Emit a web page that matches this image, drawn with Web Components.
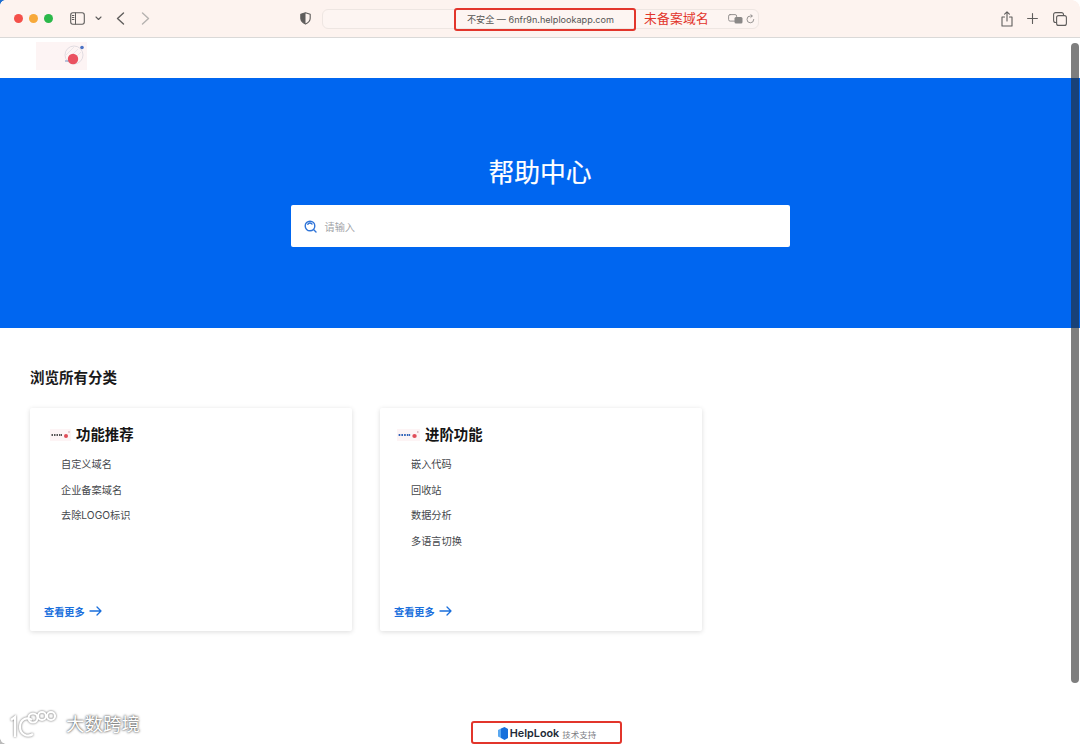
<!DOCTYPE html>
<html lang="zh-CN">
<head>
<meta charset="UTF-8">
<title>帮助中心</title>
<style>
    html, body { margin: 0; height: 100%; background: #fff; }
    body {
        width: 1080px; height: 744px; overflow: hidden; position: relative;
        font-family: "Inter", "Noto Sans CJK SC", sans-serif;
        display: flex; flex-direction: column;
    }
</style>
</head>
<body>
<browser-bar></browser-bar>
<site-logo></site-logo>
<hero-search heading="帮助中心" placeholder="请输入"></hero-search>
<category-list heading="浏览所有分类">
    <category-card heading="功能推荐" dots="#555">
        <span>自定义域名</span><span>企业备案域名</span><span>去除LOGO标识</span>
    </category-card>
    <category-card heading="进阶功能" dots="#2f62b8" wide>
        <span>嵌入代码</span><span>回收站</span><span>数据分析</span><span>多语言切换</span>
    </category-card>
</category-list>
<site-footer></site-footer>
<page-overlays></page-overlays>

<script>
    // ------------------------------------------------------------ helper
    function define(tag, html, init) {
        customElements.define(tag, class extends HTMLElement {
            constructor() {
                super();
                this.attachShadow({ mode: 'open' }).innerHTML = html;
            }
            connectedCallback() {
                if (init) init(this, this.shadowRoot);
            }
        });
    }

    // ------------------------------------------------------------ <browser-bar>
    define('browser-bar', `
        <style>
            :host { display: flex; align-items: center; flex: none; height: 37px; background: #fdf3ef;
                    border-bottom: 1px solid #dad9d8; color: #5f5d5c; position: relative; }
            svg { display: block; fill: none; stroke: currentColor; stroke-linecap: round; stroke-linejoin: round; flex: none; }
            .lights { display: flex; gap: 6px; margin-left: 14px; }
            .lights i { width: 9px; height: 9px; border-radius: 50%; }
            .side { margin-left: 17px; }
            .chev { margin-left: 10px; }
            .back { margin-left: 14px; }
            .fwd { margin-left: 15.5px; color: #b5b2b0; }
            .shield { margin-left: 150.5px; }
            .url { margin-left: 11px; width: 437px; height: 20px; box-sizing: border-box; border: 1px solid #eee6e2;
                   border-radius: 6px; background: #fdf5f2; display: flex; align-items: center; flex: none; }
            .addr { margin-left: 141.5px; width: 152px; text-align: center; white-space: nowrap; font-size: 9.1px; color: #565554; }
            .tr { margin-left: 111.5px; color: #8a8887; }
            .re { margin-left: 3px; color: #8a8887; }
            .share { margin-left: 242px; }
            .plus { margin-left: 14px; }
            .tabs { margin-left: 15px; }
            .note { position: absolute; left: 644px; top: 10px; font-size: 12.8px; line-height: 17px; color: #e2352b; letter-spacing: .2px; }
        </style>
        <div class="lights">
            <i style="background:#f4504a"></i><i style="background:#f7a93a"></i><i style="background:#2bb84a"></i>
        </div>
        <svg class="side" width="15" height="13" viewBox="0 0 15 13"><rect x=".7" y=".7" width="13.6" height="11.6" rx="2.2" stroke-width="1.1"/><path d="M5.5 1v11M2.3 3.5h1.6M2.3 5.5h1.6M2.3 7.5h1.6" stroke-width="1"/></svg>
        <svg class="chev" width="7" height="5" viewBox="0 0 7 5"><path d="M1 1l2.5 2.5L6 1" stroke-width="1.1"/></svg>
        <svg class="back" width="9" height="13" viewBox="0 0 9 13"><path d="M7.5 1L1.5 6.5l6 5.5" stroke-width="1.4"/></svg>
        <svg class="fwd" width="9" height="13" viewBox="0 0 9 13"><path d="M1.5 1l6 5.5-6 5.5" stroke-width="1.4"/></svg>
        <svg class="shield" width="11" height="13" viewBox="0 0 11 13"><path d="M5.5 .8l4.7 1.5v4c0 2.8-2 4.6-4.7 5.8C2.8 10.900.8 9.100.8 6.300v-4z" stroke-width="1.1"/><path d="M5.500 .8v11.300C2.800 10.900.8 9.100.8 6.300v-4z" fill="currentColor" stroke="none"/></svg>
        <div class="url">
            <span class="addr">不安全 — 6nfr9n.helplookapp.com</span>
            <svg class="tr" width="15" height="10" viewBox="0 0 15 10"><rect x=".6" y=".6" width="8" height="6.5" rx="1.5" stroke-width=".9"/><rect x="6.5" y="3" width="8" height="6.5" rx="1.5" fill="currentColor" stroke="none"/></svg>
            <svg class="re" width="9" height="10" viewBox="0 0 9 10"><path d="M7.8 5.5A3.4 3.4 0 1 1 4.5 2H6M4.8 .6L6.3 2 4.800 3.400" stroke-width=".9"/></svg>
        </div>
        <svg class="share" width="12" height="16" viewBox="0 0 12 16"><path d="M3.5 6H1v9h10V6H8.5M6 10V1M3.6 3.2L6 .9l2.4 2.3" stroke-width="1.1"/></svg>
        <svg class="plus" width="11" height="11" viewBox="0 0 11 11"><path d="M5.5 .6v9.8M.6 5.5h9.8" stroke-width="1.1"/></svg>
        <svg class="tabs" width="14" height="14" viewBox="0 0 14 14"><rect x="3.6" y="3.6" width="9.8" height="9.8" rx="2" stroke-width="1.1"/><path d="M10.5 3.5V2.6A2 2 0 0 0 8.5.6H2.6a2 2 0 0 0-2 2v5.9a2 2 0 0 0 2 2h1" stroke-width="1.1"/></svg>
        <span class="note">未备案域名</span>
    `);

    // ------------------------------------------------------------ <site-logo>
    define('site-logo', `
        <style>
            :host { display: block; flex: none; height: 40px; padding-left: 36px; box-sizing: border-box; padding-top: 4px; }
            svg { display: block; }
        </style>
        <svg width="51" height="28" viewBox="0 0 51 28">
            <rect width="51" height="28" fill="#fdf4f4"/>
            <circle cx="38" cy="13" r="9" fill="none" stroke="#d9d6dc" stroke-width=".8"/>
            <path d="M32 17l10-10M35 20l10-10M30 13l8-8" stroke="#dedbe0" stroke-width=".6"/>
            <circle cx="46" cy="5.5" r="1.8" fill="#4a72c4"/>
            <path d="M29 19h5" stroke="#7a8fc0" stroke-width="1"/>
            <circle cx="37" cy="17" r="5.2" fill="#ea5160"/>
        </svg>
    `);

    // ------------------------------------------------------------ <hero-search>
    define('hero-search', `
        <style>
            :host { display: flex; flex-direction: column; align-items: center; flex: none; height: 250px;
                    box-sizing: border-box; padding-top: 77px; background: #0066f0; }
            h1 { margin: 0; font-size: 25.8px; line-height: 36px; font-weight: 400; color: #fff; -webkit-text-stroke: .2px #fff; }
            .box { margin-top: 14px; width: 499px; height: 42px; box-sizing: border-box; background: #fff; border-radius: 2px;
                   display: flex; align-items: center; gap: 8px; padding-left: 13px; }
            .ph { font-size: 10.2px; color: #a3a5a8; }
            svg { display: block; fill: none; stroke: #2f74d8; stroke-width: 1.4; stroke-linecap: round; }
        </style>
        <h1 id="t"></h1>
        <div class="box">
            <svg width="13" height="13" viewBox="0 0 13 13"><circle cx="6" cy="6" r="4.8"/><path d="M3.8 4.2A3 3 0 0 1 8 4M9.5 9.5l2.500 2.500"/></svg>
            <span class="ph" id="p"></span>
        </div>
    `, (el, root) => {
        root.getElementById('t').textContent = el.getAttribute('heading');
        root.getElementById('p').textContent = el.getAttribute('placeholder');
    });

    // ------------------------------------------------------------ <category-list>
    define('category-list', `
        <style>
            :host { display: block; flex: 1; padding: 40px 30px 0; box-sizing: border-box; }
            h2 { margin: 0 0 20px; font-size: 14.5px; line-height: 20px; font-weight: 600; color: #1a1a1a; }
            .grid { display: flex; gap: 28.5px; }
        </style>
        <h2 id="t"></h2>
        <div class="grid"><slot></slot></div>
    `, (el, root) => {
        root.getElementById('t').textContent = el.getAttribute('heading');
    });

    // ------------------------------------------------------------ <category-card>
    define('category-card', `
        <style>
            :host { display: flex; flex-direction: column; width: 321.5px; height: 223px; box-sizing: border-box;
                    padding: 17px 14px 12px 20px; background: #fff; border-radius: 2px;
                    box-shadow: 0 1px 5px rgba(0,0,0,.14); }
            :host([wide]) .head svg { margin-left: -3px; width: 23px; }
            .head { display: flex; align-items: center; gap: 5px; height: 20px; }
            h3 { margin: 0; font-size: 14.4px; line-height: 20px; font-weight: 600; color: #151515; }
            svg { display: block; }
            .items { display: flex; flex-direction: column; margin: 7px 0 0 11px; flex: 1; }
            ::slotted(span) { display: block; font-size: 10.2px; line-height: 25.7px; color: #45484c; }
            .more { display: flex; align-items: center; gap: 4px; margin-left: -6px; height: 16px;
                    font-size: 10.2px; font-weight: 600; color: #1a6fdc; }
            .more svg { fill: none; stroke: #1a6fdc; stroke-width: 1.3; stroke-linecap: round; stroke-linejoin: round; }
        </style>
        <div class="head">
            <svg width="21" height="12" viewBox="0 0 21 12" preserveAspectRatio="none">
                <rect width="21" height="12" fill="#fdf4f5"/>
                <path id="d" d="M1.5 6H3M4 6h1.5M6.5 6H8M9 6h1.500M11 6h1" stroke-width="2.2"/>
                <circle cx="16" cy="7" r="2" fill="#e04c58"/>
                <circle cx="19" cy="3" r=".8" fill="#c7a0a8"/>
            </svg>
            <h3 id="t"></h3>
        </div>
        <div class="items"><slot></slot></div>
        <div class="more">查看更多
            <svg width="13" height="10" viewBox="0 0 13 10"><path d="M1 5h11M8 1l4 4-4 4"/></svg>
        </div>
    `, (el, root) => {
        root.getElementById('t').textContent = el.getAttribute('heading');
        root.getElementById('d').setAttribute('stroke', el.getAttribute('dots'));
    });

    // ------------------------------------------------------------ <site-footer>
    define('site-footer', `
        <style>
            :host { display: flex; align-items: center; justify-content: center; flex: none; height: 22px;
                    padding: 1px 0 0 14px; box-sizing: border-box; gap: 2px; }
            svg { display: block; }
            b { font-size: 10.8px; font-weight: 600; color: #222a36; }
            span { font-size: 8.5px; color: #7d8085; margin-left: 1px; }
        </style>
        <svg width="10" height="13" viewBox="0 0 10 13">
            <path d="M0 3l3-1.500V11L0 9.500z" fill="#5aa8f0"/>
            <path d="M3 1.500L6.500 0 10 2v9l-3.500 2L3 11z" fill="#1670dc"/>
        </svg>
        <b>HelpLook</b><span>技术支持</span>
    `);

    // ------------------------------------------------------------ <page-overlays> annotation boxes, watermark, scrollbar
    define('page-overlays', `
        <style>
            :host { display: block; position: absolute; inset: 0; pointer-events: none; }
            .red { position: absolute; box-sizing: border-box; border: 2px solid #e2352b; border-radius: 3px; }
            .bar { position: absolute; left: 1071px; top: 43px; width: 8px; height: 640px; border-radius: 4px; background: rgba(40,40,40,.6); }
            .mark { position: absolute; left: 9px; top: 709px; display: flex; align-items: center; gap: 9px;
                    font-size: 18.5px; line-height: 28px; color: #fff;
                    text-shadow: 0 0 2px rgba(0,0,0,.7), 0 0 3px rgba(0,0,0,.4); }
            .mark svg { display: block; fill: none; stroke: #fff; stroke-width: 2.2; filter: drop-shadow(0 0 1px rgba(0,0,0,.6)); }
            .corner { position: absolute; left: 0; top: 0; width: 5px; height: 5px; background: radial-gradient(circle at 100% 100%, transparent 4.5px, #1f6fd0 5px); }
            .corner2 { position: absolute; right: 0; top: 0; width: 8px; height: 8px; background: radial-gradient(circle at 0 100%, transparent 7.5px, #fff 8px); }
            .corner3 { position: absolute; left: 0; bottom: 0; width: 6px; height: 6px; background: radial-gradient(circle at 100% 0, transparent 5.5px, #bbb 6px); }
        </style>
        <div class="corner"></div>
        <div class="corner2"></div>
        <div class="corner3"></div>
        <div class="red" style="left:454px;top:8px;width:182px;height:23px"></div>
        <div class="red" style="left:471px;top:721px;width:151px;height:23px"></div>
        <div class="bar"></div>
        <div class="mark">
            <svg width="48" height="30" viewBox="0 0 48 30">
                <path d="M2 11l4-3v20M23 11c-6-4-12 0-12 7s7 11 13 7"/>
                <circle cx="24" cy="9" r="4.5"/><circle cx="33" cy="7" r="4"/><circle cx="42" cy="7" r="4"/>
            </svg>
            <span>大数跨境</span>
        </div>
    `);
</script>
</body>
</html>
